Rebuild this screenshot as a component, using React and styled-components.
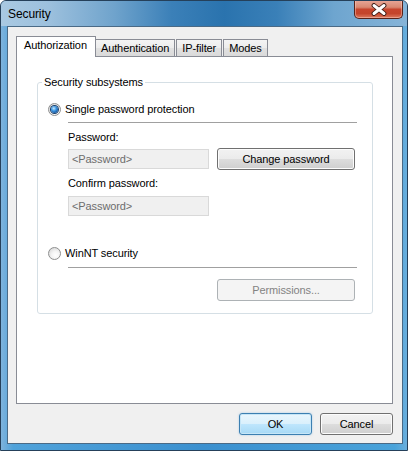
import React from 'react';
import styled, { createGlobalStyle, css } from 'styled-components';

const Global = createGlobalStyle`
  html, body { margin: 0; padding: 0; background: #ffffff; }
  * { box-sizing: border-box; }
  body {
    font-family: 'Liberation Sans', Arial, sans-serif;
    font-size: 11px;
    color: #000;
  }
`;

export default function App() {
  return (
    <>
      <Global />
      <Window>
        <TitleBar>
          <Title>Security</Title>
          <CloseButton aria-label="Close">
            <svg width="18" height="13" viewBox="0 0 18 13">
              <path d="M4 2.5 L14 10.5 M14 2.5 L4 10.5" stroke="#3b1a14" strokeWidth="4.8" strokeLinecap="round" />
              <path d="M4 2.5 L14 10.5 M14 2.5 L4 10.5" stroke="#ffffff" strokeWidth="3" strokeLinecap="round" />
            </svg>
          </CloseButton>
        </TitleBar>
        <Client>
          <TabList>
            <Tab active>Authorization</Tab>
            <Tab>Authentication</Tab>
            <Tab>IP-filter</Tab>
            <Tab>Modes</Tab>
          </TabList>
          <Panel>
            <GroupBox>
              <Legend>Security subsystems</Legend>
              <RadioRow top={13}>
                <Radio checked />
                <span>Single password protection</span>
              </RadioRow>
              <Separator top={6} />
              <Indented>
                <Label top={7}>Password:</Label>
                <FieldRow top={4}>
                  <Input>&lt;Password&gt;</Input>
                  <Button>Change password</Button>
                </FieldRow>
                <Label top={6}>Confirm password:</Label>
                <FieldRow top={5}>
                  <Input>&lt;Password&gt;</Input>
                </FieldRow>
              </Indented>
              <RadioRow top={29}>
                <Radio />
                <span>WinNT security</span>
              </RadioRow>
              <Separator top={7} />
              <RightRow>
                <Button disabled>Permissions...</Button>
              </RightRow>
            </GroupBox>
          </Panel>
          <Footer>
            <Button primary wide>OK</Button>
            <Button wide>Cancel</Button>
          </Footer>
        </Client>
      </Window>
    </>
  );
}

const Window = styled.div`
  width: 408px;
  height: 451px;
  display: flex;
  flex-direction: column;
  border: 1px solid #25405a;
  border-radius: 6px 6px 0 0;
  padding: 0 4px 6px 6px;
  background: linear-gradient(90deg, #7fb3dc 0%, #4fa2da 3%, #3b90cf 50%, #4aa3da 97%, #6aaedc 100%);
  overflow: hidden;
`;

const TitleBar = styled.div`
  height: 25px;
  margin: 0 -4px 0 -6px;
  padding: 0 4px 0 7px;
  display: flex;
  justify-content: space-between;
  align-items: flex-start;
  background: linear-gradient(90deg,
    #a9c9e2 0%, #9cc0dd 12%, #6fa3cc 28%, #3b80b8 42%, #2a73ae 55%,
    #3a80b8 68%, #6ea5cf 82%, #86b4d8 100%);
`;

const Title = styled.div`
  font-family: 'Liberation Sans', Arial, sans-serif;
  font-size: 12px;
  line-height: 14px;
  padding-top: 6px;
  color: #000;
  letter-spacing: -0.1px;
`;

const CloseButton = styled.div`
  width: 49px;
  height: 19px;
  margin-top: -1px;
  display: flex;
  align-items: center;
  justify-content: center;
  border: 1px solid #58231a;
  border-top: none;
  border-radius: 0 0 5px 5px;
  background: linear-gradient(180deg, #e9a899 0%, #d98872 40%, #c7452d 52%, #c4442b 75%, #dc7a5f 100%);
  box-shadow: inset 0 0 0 1px rgba(255, 210, 200, 0.45);
`;

const Client = styled.div`
  flex: 1;
  display: flex;
  flex-direction: column;
  border: 1px solid #4a6a86;
  background: #f0f0f0;
  padding: 9px 9px 0 8px;
`;

const TabList = styled.div`
  display: flex;
  align-items: flex-end;
  height: 20px;
  padding-left: 2px;
  position: relative;
  z-index: 1;
`;

const Tab = styled.div`
  height: 17px;
  padding: 0 5px;
  line-height: 16px;
  border: 1px solid #898c95;
  border-bottom: none;
  margin-right: 1px;
  background: linear-gradient(180deg, #f4f4f4 0%, #ececec 50%, #e1e1e1 51%, #dadada 100%);
  white-space: nowrap;
  letter-spacing: -0.1px;
  ${p => p.active && css`
    height: 21px;
    margin: 0 -1px -1px -2px;
    padding: 1px 8px 0 7px;
    background: #ffffff;
    line-height: 14px;
    position: relative;
    z-index: 2;
  `}
`;

const Panel = styled.div`
  flex: 1;
  border: 1px solid #898c95;
  background: #ffffff;
  padding: 18px 19px 0 20px;
`;

const GroupBox = styled.fieldset`
  margin: 0;
  padding: 0 15px 12px 0;
  border: 1px solid #d5dfe5;
  border-radius: 3px;
  min-width: 0;
`;

const Legend = styled.legend`
  margin-left: 4px;
  padding: 0 2px;
  line-height: 14px;
  color: #000;
  letter-spacing: -0.1px;
`;

const RadioRow = styled.div`
  display: flex;
  align-items: center;
  gap: 4px;
  height: 14px;
  margin-top: ${p => p.top}px;
  padding-left: 10px;
  letter-spacing: -0.1px;
`;

const Radio = styled.span`
  width: 13px;
  height: 13px;
  border-radius: 50%;
  border: 1px solid #8e8f8f;
  background: radial-gradient(circle at 60% 65%, #ffffff 0%, #f4f4f4 40%, #cfcfcf 100%);
  display: flex;
  align-items: center;
  justify-content: center;
  flex-shrink: 0;
  &::after {
    content: '';
    width: 7px;
    height: 7px;
    border-radius: 50%;
    display: ${p => (p.checked ? 'block' : 'none')};
    background: radial-gradient(circle at 40% 35%, #c8ecff 0%, #3a93e0 40%, #0e4e97 80%);
    box-shadow: 0 0 0 1px #1a3f6a;
  }
`;

const Separator = styled.div`
  height: 1px;
  margin: ${p => p.top}px 0 0 30px;
  background: #a0a0a0;
`;

const Indented = styled.div`
  padding-left: 30px;
`;

const Label = styled.div`
  line-height: 14px;
  margin-top: ${p => p.top}px;
  letter-spacing: -0.1px;
`;

const FieldRow = styled.div`
  display: flex;
  align-items: center;
  gap: 8px;
  margin-top: ${p => p.top}px;
  height: 22px;
`;

const Input = styled.div`
  width: 141px;
  height: 20px;
  border: 1px solid #d9d9d9;
  background: #f0f0f0;
  color: #6d6d6d;
  line-height: 18px;
  padding-left: 3px;
  letter-spacing: -0.1px;
`;

const Button = styled.div`
  width: ${p => (p.wide ? 73 : 138)}px;
  height: 22px;
  display: flex;
  align-items: center;
  justify-content: center;
  border: 1px solid #707070;
  border-radius: 3px;
  background: linear-gradient(180deg, #f2f2f2 0%, #ebebeb 50%, #dddddd 51%, #cfcfcf 100%);
  box-shadow: inset 0 0 0 1px #fcfcfc;
  color: #000;
  letter-spacing: -0.1px;
  ${p => p.primary && css`
    border-color: #3c7fb1;
    background: linear-gradient(180deg, #eaf6fd 0%, #d9f0fc 50%, #bee6fd 51%, #a7d9f5 100%);
    box-shadow: inset 0 0 0 1px #c6e6f7, 0 0 2px rgba(80, 160, 220, 0.5);
  `}
  ${p => p.disabled && css`
    border-color: #adb2b5;
    background: #f4f4f4;
    box-shadow: none;
    color: #838383;
  `}
`;

const RightRow = styled.div`
  display: flex;
  justify-content: flex-end;
  margin-top: 11px;
  padding-right: 2px;
`;

const Footer = styled.div`
  display: flex;
  justify-content: flex-end;
  gap: 8px;
  padding: 9px 0 8px;
`;
